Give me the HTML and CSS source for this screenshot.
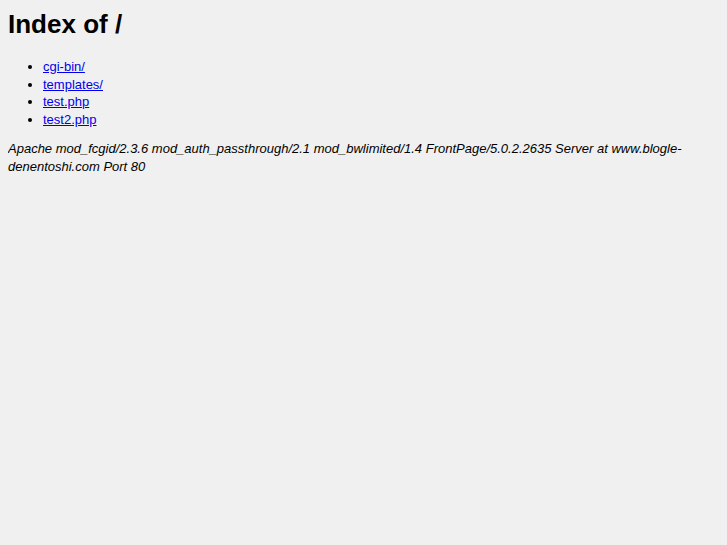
FILE: index.html
```html
<!DOCTYPE html>
<html>
<head>
<meta charset="utf-8">
<title>Index of /</title>
<link rel="stylesheet" href="styles.css">
</head>
<body>
<h1 class="title">Index of /</h1>
<ul class="listing">
<li><a href="#">cgi-bin/</a></li>
<li><a href="#">templates/</a></li>
<li><a href="#">test.php</a></li>
<li><a href="#">test2.php</a></li>
</ul>
<address class="sig">Apache mod_fcgid/2.3.6 mod_auth_passthrough/2.1 mod_bwlimited/1.4 FrontPage/5.0.2.2635 Server at www.blogle-denentoshi.com Port 80</address>
</body>
</html>
```

FILE: styles.css
```css
html {
  background: #f0f0f0;
}
body {
  margin: 0 8px 8px;
  font-family: "Liberation Sans", Arial, sans-serif;
  font-size: 13px;
  line-height: 17.5px;
  color: #000;
}
.title {
  font-size: 26px;
  font-weight: bold;
  line-height: 30px;
  margin: 9px 0 19px;
}
.listing {
  margin: 13px 0 12px;
  padding-left: 35px;
}
.listing a {
  color: #0000ee;
}
.sig {
  font-style: italic;
  margin: 0;
}
```
